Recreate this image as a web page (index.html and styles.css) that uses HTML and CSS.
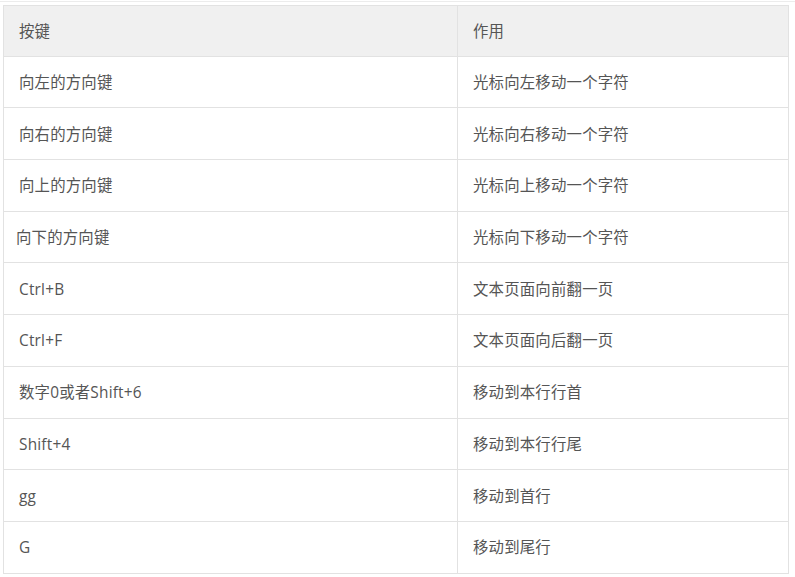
FILE: index.html
```html
<!DOCTYPE html>
<html lang="zh-CN">
<head>
<meta charset="utf-8">
<link rel="stylesheet" href="styles.css">
</head>
<body>
<div class="page">
  <div class="topline"></div>
  <table class="keys">
    <thead>
      <tr><th class="c1">按键</th><th class="c2">作用</th></tr>
    </thead>
    <tbody>
      <tr><td>向左的方向键</td><td>光标向左移动一个字符</td></tr>
      <tr><td>向右的方向键</td><td>光标向右移动一个字符</td></tr>
      <tr><td>向上的方向键</td><td>光标向上移动一个字符</td></tr>
      <tr><td><span class="shift">向下的方向键</span></td><td>光标向下移动一个字符</td></tr>
      <tr><td>Ctrl+B</td><td>文本页面向前翻一页</td></tr>
      <tr><td>Ctrl+F</td><td>文本页面向后翻一页</td></tr>
      <tr><td>数字0或者Shift+6</td><td>移动到本行行首</td></tr>
      <tr><td>Shift+4</td><td>移动到本行行尾</td></tr>
      <tr><td>gg</td><td>移动到首行</td></tr>
      <tr><td>G</td><td>移动到尾行</td></tr>
    </tbody>
  </table>
</div>
</body>
</html>
```

FILE: styles.css
```css
html, body {
  margin: 0;
  padding: 0;
  background: #ffffff;
}
.page {
  width: 795px;
  height: 577px;
  overflow: hidden;
  padding-top: 1px;
  box-sizing: border-box;
}
.topline {
  height: 0;
  border-top: 1px solid #ececec;
  margin-bottom: 3px;
}
.keys {
  margin-left: 3px;
  width: 786px;
  border-collapse: collapse;
  font-family: "Open Sans", "Noto Sans CJK SC", sans-serif;
  font-size: 15.4px;
  letter-spacing: 0.2px;
  color: #555555;
  table-layout: fixed;
}
.keys th, .keys td {
  border: 1px solid #e2e2e2;
  text-align: left;
  font-weight: normal;
  padding: 2px 15px 0 15px;
  height: 48.7px;
  line-height: 20px;
}
.keys th {
  background: #f0f0f0;
  height: 47.7px;
}
.c1 { width: 423px; }
.shift { margin-left: -3px; }
```
